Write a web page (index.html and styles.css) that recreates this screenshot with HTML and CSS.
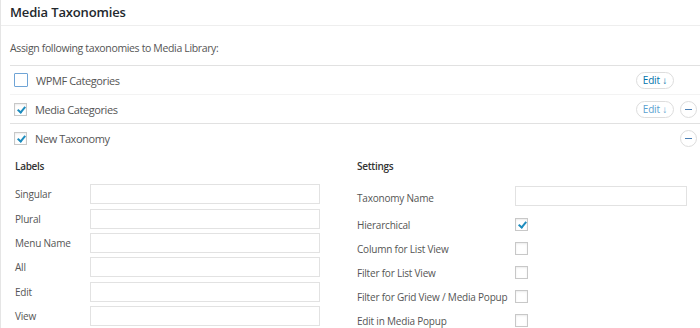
FILE: index.html
```html
<!DOCTYPE html>
<html lang="en">
<head>
  <meta charset="UTF-8">
  <title>Media Taxonomies</title>
  <link rel="stylesheet" href="styles.css">
</head>
<body>
  <div class="panel">
    <div class="panel-head">Media Taxonomies</div>
    <div class="panel-body">
      <p class="intro">Assign following taxonomies to Media Library:</p>

      <div class="tax-list">
        <div class="tax-row">
          <span class="check focus"></span>
          <span class="tax-name">WPMF Categories</span>
          <button class="edit-btn">Edit &#8595;</button>
          <span class="remove hidden"></span>
        </div>
        <div class="tax-row">
          <span class="check on"></span>
          <span class="tax-name">Media Categories</span>
          <button class="edit-btn light">Edit &#8595;</button>
          <span class="remove"></span>
        </div>
        <div class="tax-row last">
          <span class="check on"></span>
          <span class="tax-name">New Taxonomy</span>
          <span class="remove"></span>
        </div>
      </div>

      <div class="tax-edit">
        <div class="col">
          <h3>Labels</h3>
          <div class="field"><label>Singular</label><input type="text"></div>
          <div class="field"><label>Plural</label><input type="text"></div>
          <div class="field"><label>Menu Name</label><input type="text"></div>
          <div class="field"><label>All</label><input type="text"></div>
          <div class="field"><label>Edit</label><input type="text"></div>
          <div class="field"><label>View</label><input type="text"></div>
        </div>
        <div class="col settings">
          <h3>Settings</h3>
          <div class="field first"><label>Taxonomy Name</label><input type="text"></div>
          <div class="field"><label>Hierarchical</label><span class="check on"></span></div>
          <div class="field"><label>Column for List View</label><span class="check"></span></div>
          <div class="field"><label>Filter for List View</label><span class="check"></span></div>
          <div class="field"><label>Filter for Grid View / Media Popup</label><span class="check"></span></div>
          <div class="field"><label>Edit in Media Popup</label><span class="check"></span></div>
        </div>
      </div>
    </div>
  </div>
</body>
</html>
```

FILE: styles.css
```css
body {
  margin: 0;
  background-color: #fff;
  font-family: 'Open Sans', 'Noto Sans', sans-serif;
  color: #444;
}
.panel {
  border-left: 1px solid #e5e5e5;
  height: 328px;
  overflow: hidden;
}
.panel-head {
  height: 25px;
  line-height: 24px;
  padding-left: 9px;
  border-bottom: 1px solid #eee;
  font-size: 13px;
  font-weight: 600;
  letter-spacing: -0.15px;
  color: #23282d;
}
.panel-body {
  padding-left: 9px;
}
.intro {
  margin: 0;
  padding-top: 15px;
  height: 24px;
  line-height: 14px;
  font-size: 10.5px;
  letter-spacing: -0.35px;
  color: #555;
}
.tax-list {
  border-top: 1px solid #e1e1e1;
}
.tax-row {
  display: flex;
  align-items: center;
  height: 28px;
  padding: 0 3px 0 4px;
  border-bottom: 1px solid #f3f3f3;
}
.tax-row:nth-child(2) {
  border-bottom-color: #e1e1e1;
}
.tax-row.last {
  border-bottom: none;
}
.tax-name {
  flex: 1;
  margin-left: 8px;
  font-size: 11px;
  letter-spacing: -0.4px;
  color: #555;
}
.check {
  display: inline-block;
  position: relative;
  width: 11px;
  height: 11px;
  border: 1px solid #c8c8c8;
  background: #fff;
  box-shadow: inset 0 1px 2px rgba(0, 0, 0, 0.08);
}
.check.focus {
  width: 12px;
  height: 12px;
  border-color: #6fa4d6;
  border-radius: 1px;
  box-shadow: none;
}
.check.on::after {
  content: '';
  position: absolute;
  left: 4px;
  top: 1px;
  width: 3px;
  height: 6px;
  border: solid #1e8cbe;
  border-width: 0 2px 2px 0;
  transform: rotate(40deg);
}
.edit-btn {
  height: 17px;
  padding: 0 6px;
  border: 1px solid #ddd;
  border-radius: 9px;
  background: #fff;
  font-family: inherit;
  font-size: 10px;
  letter-spacing: -0.2px;
  line-height: 14px;
  color: #0073aa;
}
.edit-btn.light {
  color: #5a9fcf;
}
.remove {
  position: relative;
  width: 15px;
  height: 15px;
  margin-left: 6px;
  border: 1px solid #ddd;
  border-radius: 50%;
}
.remove::after {
  content: '';
  position: absolute;
  left: 4px;
  right: 4px;
  top: 7px;
  height: 1px;
  background: #4a7fb5;
}
.remove.hidden {
  visibility: hidden;
}
.tax-edit {
  display: grid;
  grid-template-columns: 305px 330px;
  column-gap: 37px;
  padding-left: 5px;
}
.tax-edit h3 {
  margin: 8px 0 9px;
  height: 13px;
  line-height: 13px;
  font-size: 10px;
  font-weight: 600;
  letter-spacing: -0.3px;
  color: #333;
}
.field {
  display: flex;
  align-items: center;
  height: 24.4px;
  font-size: 10px;
  line-height: 12px;
  letter-spacing: -0.2px;
  color: #555;
}
.field label {
  width: 75px;
}
.settings .field {
  height: 24.1px;
}
.settings .field label {
  width: 158px;
}
.settings .field.first {
  height: 26.5px;
  margin-top: 13px;
  align-items: flex-start;
}
.settings .field.first label {
  padding-top: 6px;
}
.field input {
  width: 230px;
  height: 20px;
  box-sizing: border-box;
  border: 1px solid #e2e2e2;
  background: #fff;
  margin: 0;
}
.settings .field input {
  width: 172px;
}
```
